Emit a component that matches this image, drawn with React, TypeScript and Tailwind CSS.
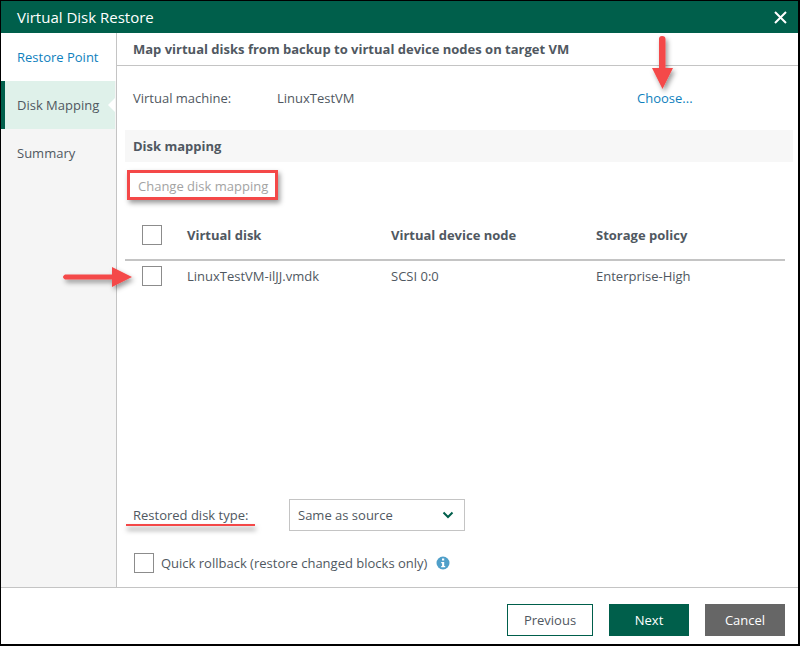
import React from "react";

const Box = () => <div className="w-5 h-5 border border-[#8c8c8c] bg-white shrink-0" />;

export default function App() {
  return (
    <div className="relative w-[800px] h-[646px] bg-white border border-black border-r-2 border-b-2 flex flex-col overflow-hidden font-['Open_Sans',sans-serif] text-[13px] text-[#505861]">
      <header className="h-[32px] bg-[#005f4b] flex items-center justify-between pl-4 pr-[11px] shrink-0">
        <span className="text-white text-[15px] leading-none">Virtual Disk Restore</span>
        <svg width="13" height="13" viewBox="0 0 13 13" className="block">
          <path d="M1 1 L12 12 M12 1 L1 12" stroke="#fff" strokeWidth="2" />
        </svg>
      </header>

      <div className="flex flex-1 min-h-0">
        <aside className="w-[116px] shrink-0 bg-[#f5f5f5] border-r border-[#c4c4c4] flex flex-col">
          <div className="h-[48px] bg-white flex items-center pl-4 pt-[2px] text-[#0f7fbd]">Restore Point</div>
          <div className="relative h-[48px] bg-[#dff1ea] border-l-[4px] border-[#005f4b] flex items-center pl-3 pt-[2px] mr-px">
            Disk Mapping
            <span className="absolute right-0 top-[17px] w-0 h-0 border-y-[7px] border-y-transparent border-r-[7px] border-r-white" />
          </div>
          <div className="h-[48px] flex items-center pl-4 pt-[2px]">Summary</div>
        </aside>

        <main className="flex-1 flex flex-col min-w-0">
          <div className="h-[33px] border-b border-[#c4c4c4] flex items-center pl-4 font-bold shrink-0 pt-[2px]">
            Map virtual disks from backup to virtual device nodes on target VM
          </div>
          <div className="h-[64px] flex items-center pl-4 shrink-0 pt-[1px]">
            <span className="w-[144px]">Virtual machine:</span>
            <span className="w-[360px]">LinuxTestVM</span>
            <span className="text-[#0f7fbd]">Choose...</span>
          </div>
          <div className="h-[32px] bg-[#f7f7f7] ml-2 mr-[5px] flex items-center pl-2 pt-[2px] font-bold shrink-0">Disk mapping</div>
          <div className="h-[48px] flex items-center pl-[21px] text-[#a3a3a3] shrink-0 pt-[2px]">Change disk mapping</div>

          <div className="ml-2 mr-[13px] shrink-0">
            <div className="h-[51px] border-b-2 border-[#c4c4c4] flex items-center font-bold">
              <div className="w-[62px] pl-[17px]"><Box /></div>
              <span className="w-[204px] pt-[2px]">Virtual disk</span>
              <span className="w-[205px] pt-[2px]">Virtual device node</span>
              <span className="pt-[2px]">Storage policy</span>
            </div>
            <div className="h-[30px] flex items-center">
              <div className="w-[62px] pl-[17px]"><Box /></div>
              <span className="w-[204px] pt-[2px]">LinuxTestVM-ilJJ.vmdk</span>
              <span className="w-[205px] pt-[2px]">SCSI 0:0</span>
              <span className="pt-[2px]">Enterprise-High</span>
            </div>
          </div>

          <div className="flex-1" />

          <div className="flex items-center pl-4 shrink-0 h-[32px]">
            <span className="w-[156px] pt-[2px]">Restored disk type:</span>
            <div className="w-[176px] h-[32px] border border-[#c4c4c4] flex items-center justify-between pl-[8px] pr-[10px]">
              <span className="pt-[2px]">Same as source</span>
              <svg width="12" height="8" viewBox="0 0 12 8">
                <path d="M1.5 1.5 L6 6 L10.5 1.5" fill="none" stroke="#005f4b" strokeWidth="2" />
              </svg>
            </div>
          </div>
          <div className="flex items-center pl-[17px] mt-[22px] mb-[14px] shrink-0 h-[20px]">
            <Box />
            <span className="ml-[7px] pt-[2px]">Quick rollback (restore changed blocks only)</span>
            <svg width="14" height="14" viewBox="0 0 14 14" className="ml-[9px]">
              <circle cx="7" cy="7" r="6.5" fill="#4f9fc9" />
              <rect x="6" y="2.5" width="2.2" height="2" fill="#fff" />
              <path d="M5.2 6 H8.2 V10 H9.2 V11.3 H5.2 V10 H6.1 V7.2 H5.2 Z" fill="#fff" />
            </svg>
          </div>
        </main>
      </div>

      <footer className="h-[57px] border-t border-[#c4c4c4] flex items-start justify-end pr-[13px] pt-[16px] gap-4 shrink-0 text-[13px]">
        <button className="w-[86px] h-[32px] pt-[1px] border border-[#005f4b] bg-white text-[#505861]">Previous</button>
        <button className="w-[80px] h-[32px] pt-[1px] bg-[#005f4b] text-white font-medium">Next</button>
        <button className="w-[80px] h-[32px] pt-[1px] bg-[#666666] text-white">Cancel</button>
      </footer>

      {/* annotations */}
      <div className="absolute left-[126px] top-[169px] w-[151px] h-[30px] border-[3px] border-[#f44848] shadow-[2px_3px_5px_rgba(0,0,0,0.4)]" />
      <div className="absolute left-[125px] top-[523px] w-[129px] h-[2px] bg-[#f44848] shadow-[1px_4px_5px_rgba(0,0,0,0.5)]" />
      <svg className="absolute left-[640px] top-[30px]" width="46" height="66" viewBox="0 0 46 66">
        <defs>
          <filter id="s1" x="-40%" y="-20%" width="200%" height="150%">
            <feDropShadow dx="2" dy="3" stdDeviation="2.5" floodColor="#000" floodOpacity="0.4" />
          </filter>
        </defs>
        <path d="M18 8 Q18 5 21 5 Q24.5 5 24.5 8 L24.5 37 H32 L21.5 58 L11 37 H18 Z" fill="#f44848" filter="url(#s1)" />
      </svg>
      <svg className="absolute left-[55px] top-[250px]" width="90" height="50" viewBox="0 0 90 50">
        <defs>
          <filter id="s2" x="-20%" y="-40%" width="150%" height="200%">
            <feDropShadow dx="2" dy="3" stdDeviation="2.5" floodColor="#000" floodOpacity="0.4" />
          </filter>
        </defs>
        <path d="M9 23.5 Q5 26 9 28.5 L56 28.5 V36 L76 26 L56 16 V23.5 Z" fill="#f44848" filter="url(#s2)" />
      </svg>
    </div>
  );
}
